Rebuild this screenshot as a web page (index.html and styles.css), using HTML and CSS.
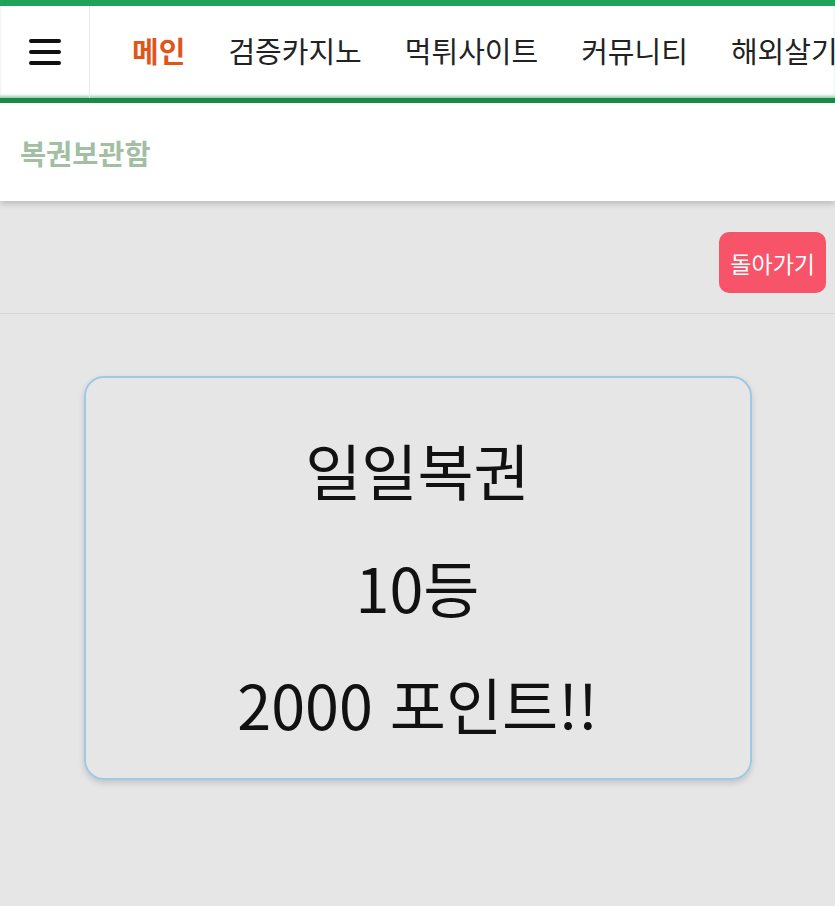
FILE: index.html
```html
<!DOCTYPE html>
<html lang="ko">
<head>
  <meta charset="UTF-8">
  <title>복권보관함</title>
  <link rel="stylesheet" href="styles.css">
</head>
<body>

<header class="topbar">
  <div class="nav">
    <div class="menu-btn">
      <span></span><span></span><span></span>
    </div>
    <ul class="nav-list">
      <li class="active">메인</li>
      <li>검증카지노</li>
      <li>먹튀사이트</li>
      <li>커뮤니티</li>
      <li>해외살기</li>
    </ul>
  </div>
  <div class="page-title">복권보관함</div>
</header>

<div class="actions">
  <button class="back-btn">돌아가기</button>
</div>

<div class="content">
  <div class="ticket">
    <p>일일복권</p>
    <p>10등</p>
    <p>2000 포인트!!</p>
  </div>
</div>

</body>
</html>
```

FILE: styles.css
```css
body {
  margin: 0;
  background: #e6e6e6;
  font-family: "Noto Sans CJK KR", "Noto Sans", sans-serif;
  overflow: hidden;
}

.topbar {
  background: white;
  border-top: 6px solid #1fa25a;
  box-shadow: 0 3px 6px rgba(0,0,0,0.18);
}

.nav {
  display: flex;
  height: 97px;
  border-bottom: 5px solid #188a47;
  box-shadow: 0 -3px 3px -1px rgba(24,138,71,0.45) inset;
  box-sizing: border-box;
}

.menu-btn {
  width: 90px;
  flex-shrink: 0;
  border-right: 1px solid #e8e8e8;
  display: flex;
  flex-direction: column;
  justify-content: center;
  align-items: center;
  gap: 6.5px;
  box-sizing: border-box;
}

.menu-btn span {
  display: block;
  width: 32px;
  height: 4.5px;
  background: #111;
  border-radius: 2px;
}

.nav-list {
  list-style: none;
  margin: 0;
  padding: 0 0 4px 42px;
  display: flex;
  align-items: center;
  gap: 43px;
  white-space: nowrap;
  overflow: hidden;
  font-size: 29px;
  color: #222;
}

.nav-list li.active {
  color: #e0561a;
  font-weight: bold;
}

.page-title {
  height: 98px;
  display: flex;
  align-items: center;
  padding-left: 20px;
  font-size: 28.4px;
  font-weight: bold;
  color: #a2bfa3;
}

.actions {
  display: flex;
  justify-content: flex-end;
  padding: 31px 9px 20px;
  border-bottom: 1px solid #d6d6d6;
}

.back-btn {
  font-family: inherit;
  font-size: 23px;
  color: white;
  background: #f7546a;
  border: none;
  border-radius: 10px;
  height: 61px;
  padding: 0 11px;
}

.content {
  padding: 62px 0;
  display: flex;
  justify-content: center;
}

.ticket {
  width: 668px;
  height: 404px;
  box-sizing: border-box;
  border: 2px solid #9ec9e4;
  border-radius: 20px;
  box-shadow: 0 3px 6px rgba(0,0,0,0.15);
  display: flex;
  flex-direction: column;
  justify-content: center;
  align-items: center;
  gap: 35px;
  padding-top: 18px;
  font-size: 61px;
  color: #111;
}

.ticket p {
  margin: 0;
  line-height: 82px;
}
```
